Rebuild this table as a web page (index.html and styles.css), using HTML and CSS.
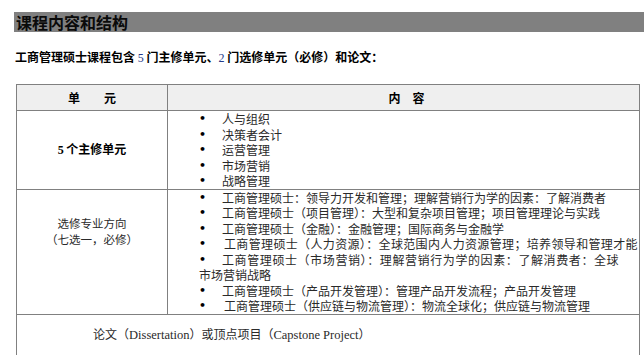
FILE: index.html
```html
<!DOCTYPE html>
<html lang="zh-CN">
<head>
<meta charset="utf-8">
<title>课程内容和结构</title>
<link rel="stylesheet" href="styles.css">
</head>
<body>
<h1 class="title-bar">课程内容和结构</h1>
<p class="intro">工商管理硕士课程包含 <span class="num">5</span> 门主修单元、<span class="num">2</span> 门选修单元（必修）和论文：</p>
<table class="course">
  <colgroup><col class="col-unit"><col></colgroup>
  <thead>
    <tr class="head"><th>单　　元</th><th class="head-content">内　容</th></tr>
  </thead>
  <tbody>
    <tr class="row-core">
      <td class="unit unit-bold"><span class="num">5</span> 个主修单元</td>
      <td class="items">
        <div class="item"><span class="bullet">•</span>人与组织</div>
        <div class="item"><span class="bullet">•</span>决策者会计</div>
        <div class="item"><span class="bullet">•</span>运营管理</div>
        <div class="item"><span class="bullet">•</span>市场营销</div>
        <div class="item"><span class="bullet">•</span>战略管理</div>
      </td>
    </tr>
    <tr class="row-elective">
      <td class="unit unit-top"><div class="unit-line">选修专业方向</div><div class="unit-line">（七选一，必修）</div></td>
      <td class="items">
        <div class="item"><span class="bullet">•</span>工商管理硕士：领导力开发和管理；理解营销行为学的因素：了解消费者</div>
        <div class="item"><span class="bullet">•</span>工商管理硕士（项目管理）：大型和复杂项目管理；项目管理理论与实践</div>
        <div class="item"><span class="bullet">•</span>工商管理硕士（金融）：金融管理；国际商务与金融学</div>
        <div class="item"><span class="bullet bullet-wide">•</span><span class="wide">工商管理硕士（人力资源）：全球范围内人力资源管理；培养领导和管理才能</span></div>
        <div class="item"><span class="bullet">•</span><span class="spread">工商管理硕士（市场营销）：理解营销行为学的因素：了解消费者：全球</span><br>市场营销战略</div>
        <div class="item"><span class="bullet">•</span>工商管理硕士（产品开发管理）：管理产品开发流程；产品开发管理</div>
        <div class="item"><span class="bullet bullet-wide">•</span>工商管理硕士（供应链与物流管理）：物流全球化；供应链与物流管理</div>
      </td>
    </tr>
    <tr class="row-thesis">
      <td colspan="2" class="thesis">论文（<span class="latin">Dissertation</span>）或顶点项目（<span class="latin">Capstone Project</span>）</td>
    </tr>
  </tbody>
</table>
</body>
</html>
```
FILE: styles.css
```css
html, body {
  margin: 0;
  padding: 0;
  background: #ffffff;
}

body {
  font-family: "Noto Sans CJK SC", "Noto Sans", sans-serif;
  color: #1a1a1a;
  font-size: 12px;
}

.title-bar {
  margin: 12px 0 0 14px;
  height: 20px;
  padding-left: 2px;
  background: #808080;
  color: #0a0a0a;
  font-size: 16px;
  font-weight: 700;
  line-height: 21px;
}

.intro {
  margin: 17px 0 0 15px;
  font-size: 12px;
  font-weight: 700;
  line-height: 16px;
  color: #000;
}

.num {
  font-family: "Liberation Serif", "Noto Sans CJK SC", serif;
}

.intro .num {
  color: #23398a;
  font-weight: 400;
}

.course {
  margin: 18px 0 0 16px;
  width: 624px;
  border-collapse: collapse;
  table-layout: fixed;
  border: 1px solid #808080;
}

.col-unit {
  width: 151px;
}

.course th,
.course td {
  border: 1px solid #808080;
  padding: 0;
}

.head th {
  height: 25px;
  background: #efefef;
  font-size: 12px;
  font-weight: 700;
  color: #000;
  text-align: center;
  vertical-align: middle;
  line-height: 14px;
}

.head .head-content {
  padding-left: 6px;
}

.unit {
  text-align: center;
  font-size: 12px;
  color: #2a2a2a;
}

.unit-bold {
  font-weight: 700;
  color: #000;
  vertical-align: middle;
  line-height: 14px;
}

.unit-top {
  vertical-align: top;
  padding-top: 25px !important;
  font-size: 11.5px;
}

.unit-line {
  line-height: 16px;
}

.items {
  vertical-align: top;
  padding: 0 0 0 31px !important;
  color: #2a2a2a;
}

.item {
  line-height: 15.5px;
  white-space: nowrap;
}

.bullet {
  display: inline-block;
  vertical-align: top;
  width: 23px;
  height: 15.5px;
  font-family: "DejaVu Sans", sans-serif;
  font-size: 11px;
  font-weight: 700;
  line-height: 15.5px;
  color: #000;
}

.bullet-wide {
  width: 25px;
}

.wide {
  letter-spacing: 0.35px;
}

.spread {
  letter-spacing: 0.6px;
}

.thesis {
  height: 40px;
  padding-left: 76px !important;
  vertical-align: middle;
  color: #2a2a2a;
  line-height: 16px;
}

.latin {
  font-family: "Liberation Serif", "Noto Sans CJK SC", serif;
  font-size: 12.5px;
}
```
